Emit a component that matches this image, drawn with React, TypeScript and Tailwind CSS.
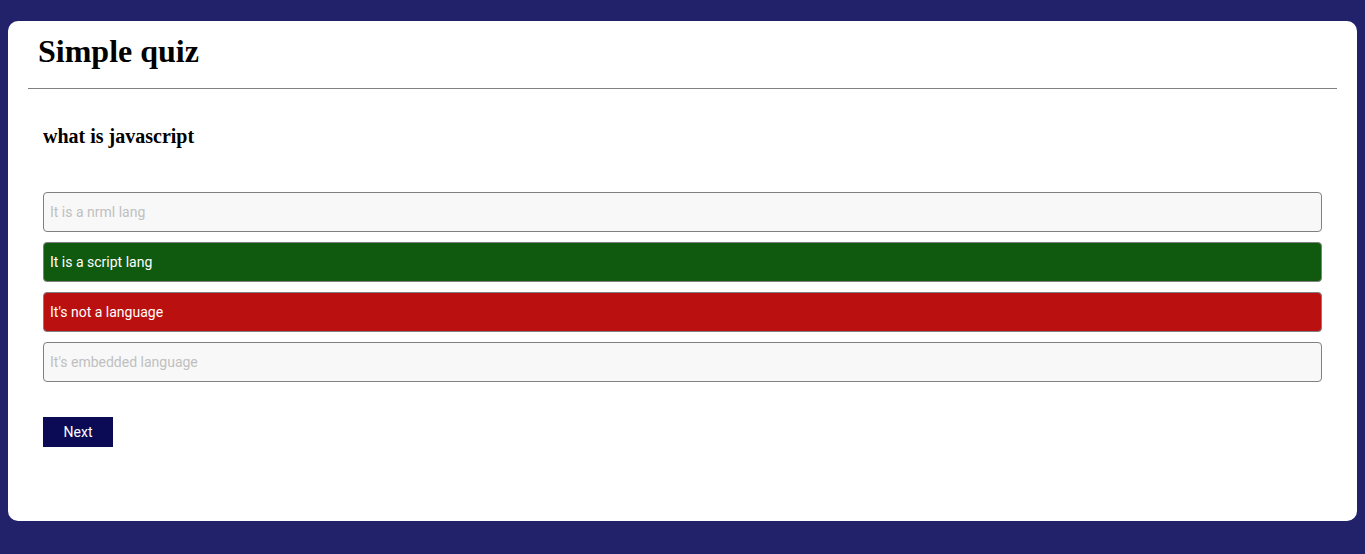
const options = [
  { text: 'It is a nrml lang', state: 'idle' },
  { text: 'It is a script lang', state: 'right' },
  { text: "It's not a language", state: 'wrong' },
  { text: "It's embedded language", state: 'idle' },
]

export default function App() {
  return (
    <div className="min-h-[554px] bg-[#22226a] px-2 pt-[21px] pb-[34px]">
      <div className="h-[500px] rounded-[10px] bg-white px-5">
        <h1 className="pl-[10px] pt-[12px] pb-[18px] font-['Liberation_Serif',serif] text-[32px] leading-[37px] font-bold text-black">
          Simple quiz
        </h1>
        <hr className="border-t border-[#808080]" />
        <div className="px-[15px]">
          <h3 className="pt-[36px] font-['Liberation_Serif',serif] text-[20px] leading-[23px] font-bold text-black">
            what is javascript
          </h3>
          <ul className="mt-[44px] flex flex-col gap-[10px]">
            {options.map((o) => (
              <li
                key={o.text}
                className={
                  o.state === 'right'
                    ? "flex h-10 items-center rounded-[4px] border border-[#808080] bg-[#0f5a0f] pl-[6px] font-['Roboto',sans-serif] text-[14px] text-white"
                    : o.state === 'wrong'
                      ? "flex h-10 items-center rounded-[4px] border border-[#808080] bg-[#bb1010] pl-[6px] font-['Roboto',sans-serif] text-[14px] text-white"
                      : "flex h-10 items-center rounded-[4px] border border-[#808080] bg-[#f8f8f8] pl-[6px] font-['Roboto',sans-serif] text-[14px] text-[#c0c0c0]"
                }
              >
                {o.text}
              </li>
            ))}
          </ul>
          <button className="mt-[35px] h-[30px] w-[70px] bg-[#0a0a55] font-['Roboto',sans-serif] text-[14px] text-white">
            Next
          </button>
        </div>
      </div>
    </div>
  )
}
